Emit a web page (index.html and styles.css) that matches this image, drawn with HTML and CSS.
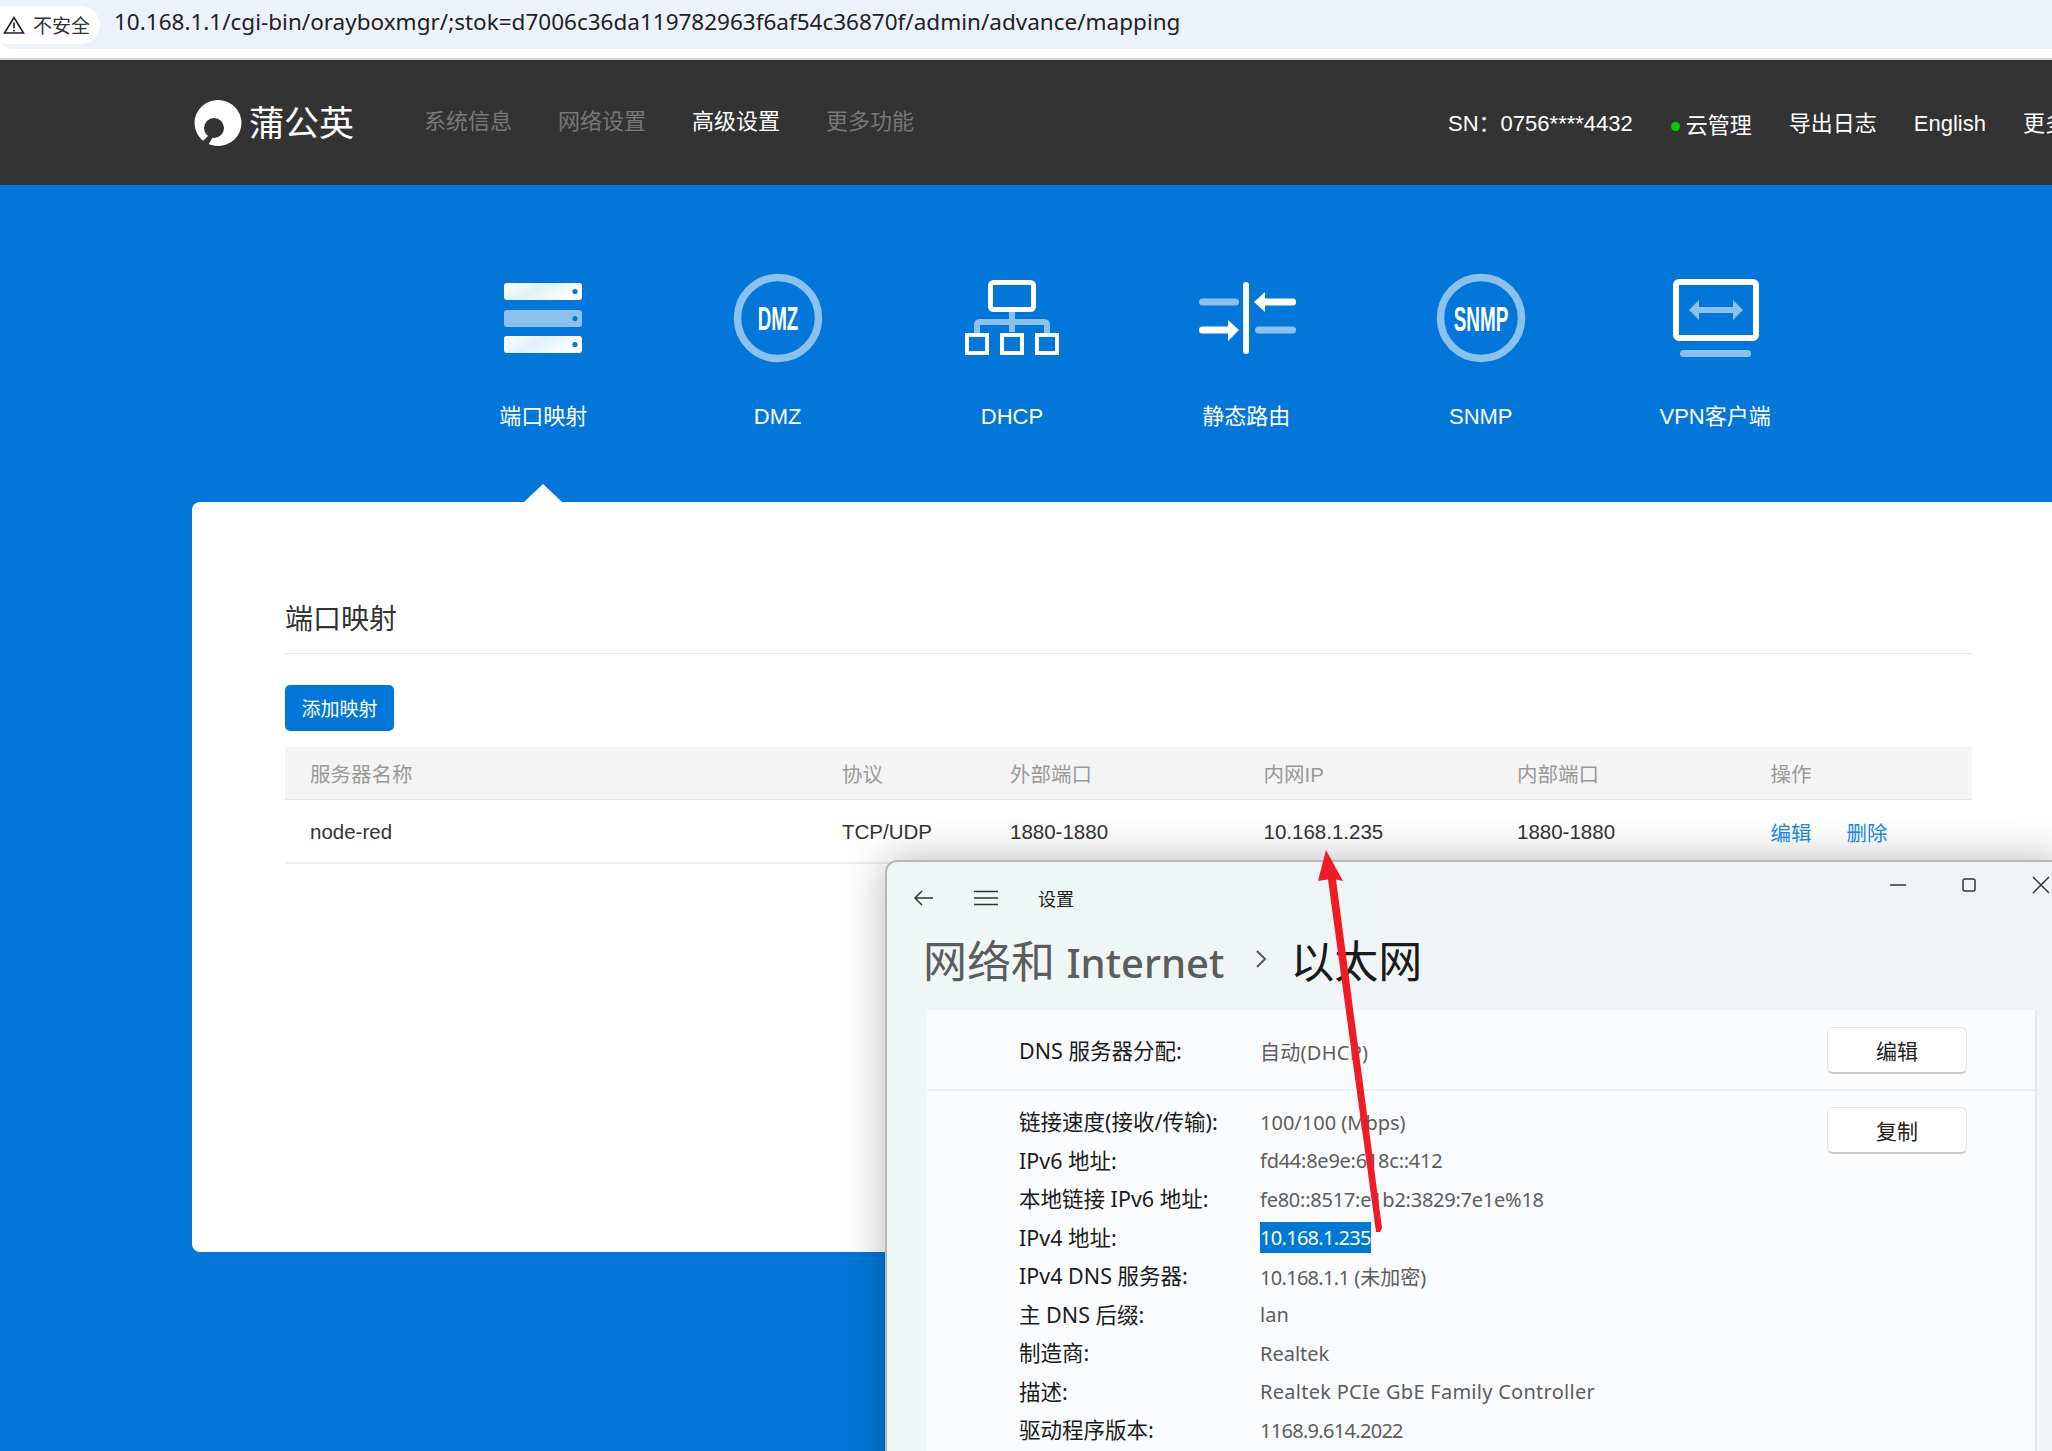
FILE: index.html
```html
<!DOCTYPE html>
<html lang="zh-CN">
<head>
  <meta charset="UTF-8" />
  <title>蒲公英 | 端口映射</title>
  <link rel="stylesheet" href="styles.css">
</head>
<body>
  <!-- Browser address bar -->
  <div class="addr-wrap">
    <div class="addr-bar">
      <div class="chip">
        <svg class="warn" width="22" height="18" viewBox="0 0 22 18"><path d="M11 1.5 L20.5 17 H1.5 Z M11 6.5 V12.5 M11 14 V15.6" fill="none" stroke="#222" stroke-width="1.6"/></svg>
        <span>不安全</span>
      </div>
      <div class="url">10.168.1.1/cgi-bin/orayboxmgr/;stok=d7006c36da119782963f6af54c36870f/admin/advance/mapping</div>
    </div>
  </div>

  <!-- Navigation -->
  <section class="menu">
    <div class="logo">
      <svg width="48" height="48" viewBox="0 0 48 48">
        <ellipse cx="24" cy="24" rx="23.5" ry="23" fill="#fff"/>
        <circle cx="20" cy="29" r="10" fill="#333"/>
        <path d="M15 36 L9 42 L14 46 L19 38 Z" fill="#333"/>
      </svg>
      <h1>蒲公英</h1>
    </div>
    <ul class="nav">
      <li><a href="#">系统信息</a></li>
      <li><a href="#">网络设置</a></li>
      <li><a class="active" href="#">高级设置</a></li>
      <li><a href="#">更多功能</a></li>
    </ul>
    <ul class="nav-right">
      <li class="sn">SN：0756****4432</li>
      <li class="cloud"><i class="dot"></i>云管理</li>
      <li>导出日志</li>
      <li>English</li>
      <li>更多功能</li>
    </ul>
  </section>

  <!-- Feature tabs -->
  <section class="band">
    <div class="tabs">
      <div class="tab active">
        <svg width="100" height="100" viewBox="0 0 100 100">
          <defs>
            <linearGradient id="barFill" x1="0" y1="0" x2="1" y2="0.4">
              <stop offset="0" stop-color="#fff"/><stop offset="0.5" stop-color="#dff0fd"/><stop offset="1" stop-color="#fff"/>
            </linearGradient>
          </defs>
          <rect x="11" y="15" width="78" height="17" rx="3" fill="url(#barFill)"/>
          <rect x="11" y="42" width="78" height="17" rx="3" fill="#8cc1ee"/>
          <rect x="11" y="68" width="78" height="17" rx="3" fill="url(#barFill)"/>
          <circle cx="82" cy="23.5" r="2.6" fill="#0277d9"/>
          <circle cx="82" cy="50.5" r="2.6" fill="#0277d9"/>
          <circle cx="82" cy="76.5" r="2.6" fill="#0277d9"/>
        </svg>
        <span>端口映射</span>
      </div>
      <div class="tab">
        <svg width="100" height="100" viewBox="0 0 100 100">
          <circle cx="50" cy="50" r="40.5" fill="none" stroke="#8cc1ee" stroke-width="7.5"/>
          <text class="badge-text" transform="translate(50 62) scale(0.57 1)" font-size="33" text-anchor="middle">DMZ</text>
        </svg>
        <span>DMZ</span>
      </div>
      <div class="tab">
        <svg width="100" height="100" viewBox="0 0 100 100">
          <path d="M50 44 V64 M50 54 H18 Q15 54 15 57 V66 M50 54 H82 Q85 54 85 57 V66" fill="none" stroke="#8cc1ee" stroke-width="6"/>
          <rect x="28.5" y="14.5" width="43" height="27" rx="3" fill="none" stroke="#fff" stroke-width="5"/>
          <rect x="5" y="67" width="20" height="18" fill="none" stroke="#fff" stroke-width="4"/>
          <rect x="40" y="67" width="20" height="18" fill="none" stroke="#fff" stroke-width="4"/>
          <rect x="75" y="67" width="20" height="18" fill="none" stroke="#fff" stroke-width="4"/>
        </svg>
        <span>DHCP</span>
      </div>
      <div class="tab">
        <svg width="100" height="100" viewBox="0 0 100 100">
          <rect x="47" y="14" width="6" height="72" rx="3" fill="#fff"/>
          <rect x="3" y="30.5" width="40" height="7" rx="3.5" fill="#8cc1ee"/>
          <path d="M58 34 L69 24 V30.5 H97 Q100 30.5 100 34 Q100 37.5 97 37.5 H69 V44 Z" fill="#fff"/>
          <path d="M43 62 L32 52 V58.5 H6 Q3 58.5 3 62 Q3 65.5 6 65.5 H32 V73 Z" fill="#fff"/>
          <rect x="59" y="58.5" width="41" height="7" rx="3.5" fill="#8cc1ee"/>
        </svg>
        <span>静态路由</span>
      </div>
      <div class="tab">
        <svg width="100" height="100" viewBox="0 0 100 100">
          <circle cx="50" cy="50" r="40.5" fill="none" stroke="#8cc1ee" stroke-width="7.5"/>
          <text class="badge-text" transform="translate(50 63) scale(0.54 1)" font-size="35" text-anchor="middle">SNMP</text>
        </svg>
        <span>SNMP</span>
      </div>
      <div class="tab">
        <svg width="100" height="100" viewBox="0 0 100 100">
          <rect x="11" y="14" width="80" height="56" rx="3" fill="none" stroke="#fff" stroke-width="6"/>
          <path d="M24 42 L34 32 V39 H68 V32 L78 42 L68 52 V45 H34 V52 Z" fill="#8cc1ee"/>
          <rect x="15" y="82" width="71" height="7" rx="3.5" fill="#8cc1ee"/>
        </svg>
        <span>VPN客户端</span>
      </div>
    </div>
  </section>

  <!-- Port mapping card -->
  <section class="card">
    <h3>端口映射</h3>
    <button class="add-btn">添加映射</button>
    <table class="map-table">
      <colgroup>
        <col class="c-name"><col class="c-proto"><col class="c-port"><col class="c-port"><col class="c-port"><col>
      </colgroup>
      <thead>
        <tr><th>服务器名称</th><th>协议</th><th>外部端口</th><th>内网IP</th><th>内部端口</th><th>操作</th></tr>
      </thead>
      <tbody>
        <tr>
          <td>node-red</td><td>TCP/UDP</td><td>1880-1880</td><td>10.168.1.235</td><td>1880-1880</td>
          <td><a href="#">编辑</a><a href="#">删除</a></td>
        </tr>
      </tbody>
    </table>
  </section>

  <!-- Windows settings window on top -->
  <div class="win">
    <div class="win-top">
      <svg class="win-back" width="22" height="18" viewBox="0 0 22 18"><path d="M20 9 H2 M9 2 L2 9 L9 16" fill="none" stroke="#333" stroke-width="1.5"/></svg>
      <svg class="win-burger" width="24" height="18" viewBox="0 0 24 18"><path d="M0 2.5 H24 M0 9 H24 M0 15.5 H24" fill="none" stroke="#333" stroke-width="1.6"/></svg>
      <span class="win-name">设置</span>
      <div class="win-ctrl">
        <svg width="16" height="16" viewBox="0 0 16 16"><path d="M0 8 H16" stroke="#333" stroke-width="1.5"/></svg>
        <svg width="16" height="16" viewBox="0 0 16 16"><rect x="2" y="2" width="12" height="12" rx="2" fill="none" stroke="#333" stroke-width="1.5"/></svg>
        <svg width="18" height="18" viewBox="0 0 18 18"><path d="M1 1 L17 17 M17 1 L1 17" stroke="#333" stroke-width="1.5"/></svg>
      </div>
    </div>
    <div class="win-title">
      <span class="crumb">网络和 <b>Internet</b></span>
      <svg width="14" height="22" viewBox="0 0 14 22"><path d="M3 3 L11 11 L3 19" fill="none" stroke="#555" stroke-width="2"/></svg>
      <span class="here">以太网</span>
    </div>
    <div class="panel">
      <div class="panel-row first">
        <dl class="props">
          <div><dt>DNS 服务器分配:</dt><dd class="wide">自动(DHCP)</dd></div>
        </dl>
        <button class="win-btn">编辑</button>
      </div>
      <div class="panel-row">
        <dl class="props">
          <div><dt>链接速度(接收/传输):</dt><dd>100/100 (Mbps)</dd></div>
          <div><dt>IPv6 地址:</dt><dd class="hex">fd44:8e9e:618c::412</dd></div>
          <div><dt>本地链接 IPv6 地址:</dt><dd class="hex">fe80::8517:e1b2:3829:7e1e%18</dd></div>
          <div><dt>IPv4 地址:</dt><dd><span class="sel num">10.168.1.235</span></dd></div>
          <div><dt>IPv4 DNS 服务器:</dt><dd><span class="num">10.168.1.1</span> (未加密)</dd></div>
          <div><dt>主 DNS 后缀:</dt><dd>lan</dd></div>
          <div><dt>制造商:</dt><dd>Realtek</dd></div>
          <div><dt>描述:</dt><dd class="wide">Realtek PCIe GbE Family Controller</dd></div>
          <div><dt>驱动程序版本:</dt><dd class="num">1168.9.614.2022</dd></div>
        </dl>
        <button class="win-btn">复制</button>
      </div>
    </div>
  </div>

  <!-- Red annotation arrow -->
  <svg class="arrow" width="100" height="400" viewBox="1300 840 100 400">
    <path d="M1326 850 L1343 881 L1336 879.500 L1382 1228 L1380 1232 L1376 1232 L1328 879.500 L1318 881 Z" fill="#ee1c25"/>
  </svg>
</body>
</html>
```

FILE: styles.css
```css
:root {
  --blue: #0277d9;
  --light-blue: #8cc1ee;
  --dark: #333;
}

* { box-sizing: border-box; }

body {
  font-family: 'Liberation Sans', 'Noto Sans CJK SC', sans-serif;
  background-color: var(--blue);
  margin: 0;
  width: 2052px;
  height: 1451px;
  overflow: hidden;
  position: relative;
}

ul { list-style: none; margin: 0; padding: 0; }
a { text-decoration: none; color: inherit; }

/* address bar */
.addr-wrap {
  height: 60px;
  background-color: #fff;
  border-bottom: 2px solid #d4d4d4;
}

.addr-bar {
  height: 49px;
  background-color: #ecf1fb;
  border-bottom-left-radius: 12px;
  display: flex;
  align-items: center;
  font-family: 'Noto Sans', 'Noto Sans CJK SC', sans-serif;
}

.chip {
  width: 100px;
  height: 38px;
  background-color: #fff;
  border-radius: 0 19px 19px 0;
  display: flex;
  align-items: center;
  gap: 8px;
  padding-left: 3px;
  font-size: 19px;
  color: #333;
}

.url {
  margin: -6px 0 0 14px;
  font-size: 22.500px;
  color: #222;
  white-space: nowrap;
}

/* top nav */
.menu {
  height: 125px;
  background-color: var(--dark);
  display: flex;
  align-items: center;
  padding-left: 194px;
  white-space: nowrap;
}

.logo {
  display: flex;
  align-items: center;
  gap: 8px;
  width: 230px;
  flex-shrink: 0;
  margin-top: -3px;
}

.logo svg { margin-top: 3px; }

.logo h1 {
  margin: -2px 0 0 -1px;
  font-size: 35px;
  font-weight: 400;
  color: #fff;
}

.nav {
  display: flex;
  gap: 46px;
  font-size: 22px;
  color: #777;
  margin-top: -7px;
  flex-shrink: 0;
}

.nav .active { color: #fff; }

.nav-right {
  display: flex;
  align-items: baseline;
  gap: 37px;
  margin: 5px 0 0 534px;
  font-size: 22px;
  line-height: 32px;
  color: #fff;
  flex-shrink: 0;
}

.cloud { display: flex; align-items: center; }
.nav-right .sn { margin-right: 1px; }

.dot {
  width: 9px;
  height: 9px;
  border-radius: 50%;
  background-color: #0c0;
  margin-right: 6px;
}

/* blue band with tabs */
.band {
  height: 317px;
  padding: 83px 0 0 426px;
}

.tabs { display: flex; }

.tab {
  width: 234.4px;
  display: flex;
  flex-direction: column;
  align-items: center;
  color: #fff;
  font-size: 22px;
  line-height: 30px;
  position: relative;
}

.tab span { margin-top: 34px; }

.tab.active::after {
  content: "";
  position: absolute;
  left: 50%;
  top: 216px;
  margin-left: -19px;
  border-left: 19px solid transparent;
  border-right: 19px solid transparent;
  border-bottom: 18px solid #fff;
}

.badge-text {
  font-family: 'Liberation Sans', sans-serif;
  font-weight: 700;
  fill: #fff;
}

/* card */
.card {
  margin-left: 192px;
  height: 750px;
  background-color: #fff;
  border-radius: 8px 0 0 8px;
  padding: 98px 80px 0 93px;
}

.card h3 {
  margin: 0;
  font-size: 28px;
  font-weight: 400;
  line-height: 40px;
  color: var(--dark);
  padding-bottom: 13px;
  border-bottom: 1px solid #e5e5e5;
}

.add-btn {
  display: block;
  margin-top: 31px;
  width: 109px;
  height: 46px;
  padding: 0 0 2px;
  border: none;
  border-radius: 5px;
  background-color: var(--blue);
  color: #fff;
  font-family: inherit;
  font-size: 19px;
}

.map-table {
  margin-top: 16px;
  width: 100%;
  table-layout: fixed;
  border-collapse: collapse;
  font-size: 20.500px;
}

.c-name { width: 557px; }
.c-proto { width: 168px; }
.c-port { width: 253.500px; }

.map-table th {
  height: 52px;
  padding: 0 0 0 25px;
  text-align: left;
  font-weight: 400;
  color: #999;
  background-color: #f4f4f4;
  border-bottom: 1px solid #e6e6e6;
}

.map-table th:nth-child(n+2) { padding-left: 0; }

.map-table td {
  height: 64px;
  padding: 3px 0 0 25px;
  color: var(--dark);
  border-bottom: 2px solid #eee;
}

.map-table td:nth-child(n+2) { padding-left: 0; }

.map-table td a {
  color: #1a8ae6;
  margin-right: 35px;
}

/* settings window */
.win {
  position: absolute;
  left: 885px;
  top: 860px;
  width: 1180px;
  height: 640px;
  background: linear-gradient(100deg, #eef7f6 0%, #f0f4f6 45%, #f1f3f7 100%);
  border: 2px solid #b4b6b7;
  border-radius: 12px 0 0 0;
  box-shadow: 0 0 44px rgba(0, 0, 0, 0.28);
  font-family: 'Noto Sans', 'Noto Sans CJK SC', sans-serif;
}

.win-top {
  height: 72px;
  display: flex;
  align-items: center;
  padding-left: 26px;
  position: relative;
}

.win-burger { margin-left: 39px; }

.win-name {
  margin-left: 40px;
  font-size: 18px;
  color: #222;
}

.win-ctrl {
  display: flex;
  align-items: center;
  gap: 55px;
  margin-left: 816px;
  margin-top: -26px;
}

.win-title {
  height: 76px;
  padding: 0 0 26px 36px;
  display: flex;
  align-items: center;
  font-size: 44px;
}

.crumb { color: #5c5c5c; }

.crumb b {
  font-size: 40px;
  font-weight: 500;
}

.win-title svg { margin: 0 22px 0 30px; }
.here { color: #1a1a1a; }

.panel {
  margin-left: 40px;
  width: 1110px;
  height: 600px;
  background-color: #fafbfc;
  border-right: 2px solid #e4e8ec;
}

.panel-row {
  display: flex;
  justify-content: space-between;
  align-items: flex-start;
  padding: 12px 68px 0 92px;
}

.panel-row.first {
  height: 81px;
  padding-top: 22px;
  border-bottom: 2px solid #eef1f4;
}

.panel-row.first .win-btn { margin-top: -5px; }
.panel-row .win-btn { margin-top: 4px; }

.props { margin: 0; }

.props div {
  display: flex;
  height: 38.500px;
  align-items: center;
  font-size: 20px;
}

.props dt {
  width: 241px;
  margin-top: -3px;
  font-size: 21.500px;
  color: #1b1b1b;
}

.props dd {
  margin: 0;
  color: #5d5d5d;
}

.props .num { letter-spacing: -0.700px; }
.props .hex { letter-spacing: -0.250px; }
.props .wide { letter-spacing: 0.270px; }

.sel {
  display: inline-block;
  line-height: 31px;
  background-color: #0078d4;
  color: #fff;
}

.win-btn {
  width: 140px;
  height: 47px;
  padding: 0;
  background-color: #fff;
  border: 1px solid #e6e6e6;
  border-bottom: 2px solid #ccc;
  border-radius: 6px;
  font-family: inherit;
  font-size: 21px;
  color: #222;
}

.arrow {
  position: absolute;
  left: 1300px;
  top: 840px;
}
```
